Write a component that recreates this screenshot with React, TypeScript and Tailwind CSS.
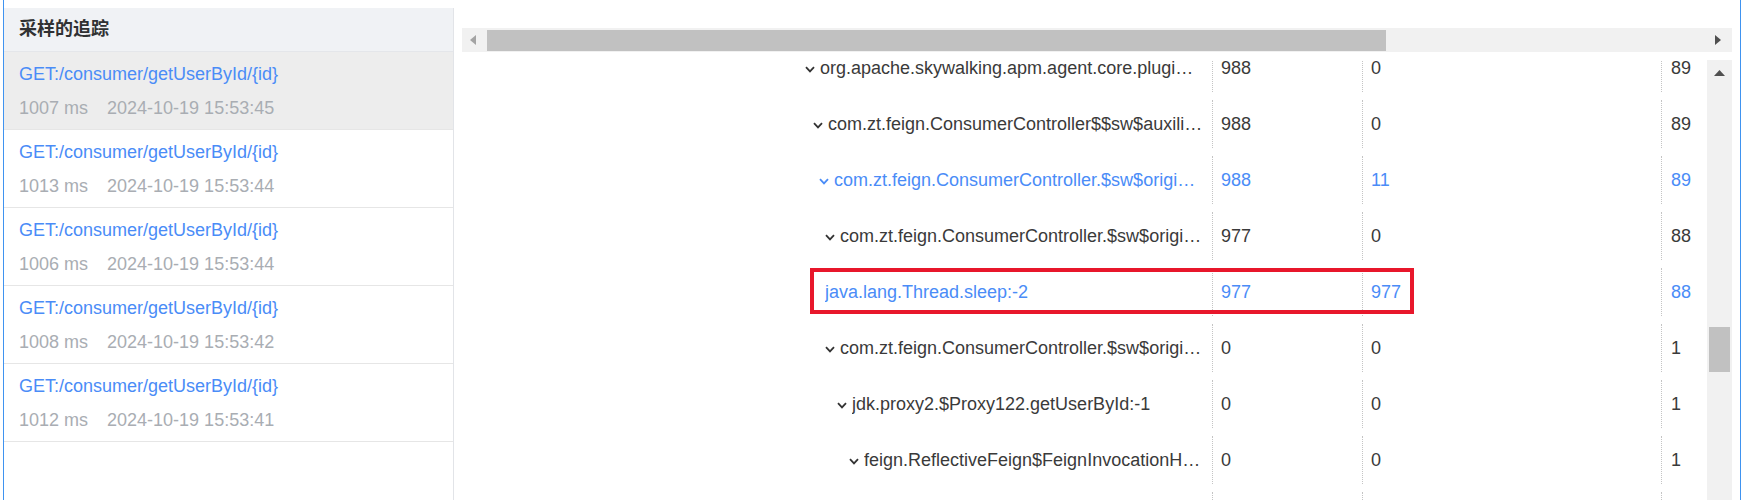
import React from "react";

const traces = [
  { ms: "1007 ms", t: "2024-10-19 15:53:45", sel: true },
  { ms: "1013 ms", t: "2024-10-19 15:53:44" },
  { ms: "1006 ms", t: "2024-10-19 15:53:44" },
  { ms: "1008 ms", t: "2024-10-19 15:53:42" },
  { ms: "1012 ms", t: "2024-10-19 15:53:41" },
];

type Row = {
  name: string;
  pl: number;
  leaf?: boolean;
  blue?: boolean;
  a: string;
  b: string;
  c: string;
  boxed?: boolean;
};

const rows: Row[] = [
  { name: "org.apache.skywalking.apm.agent.core.plugin.interceptor.enhance.InstMethodsInter.intercept:86", pl: 343, a: "988", b: "0", c: "89" },
  { name: "com.zt.feign.ConsumerController$$sw$auxiliary$k2jd7a1.call:-1", pl: 351, a: "988", b: "0", c: "89" },
  { name: "com.zt.feign.ConsumerController.$sw$original$getUserById$8s7d0f2:28", pl: 357, blue: true, a: "988", b: "11", c: "89" },
  { name: "com.zt.feign.ConsumerController.$sw$original$getUserById$8s7d0f2:27", pl: 363, a: "977", b: "0", c: "88" },
  { name: "java.lang.Thread.sleep:-2", pl: 363, leaf: true, blue: true, a: "977", b: "977", c: "88", boxed: true },
  { name: "com.zt.feign.ConsumerController.$sw$original$getUserById$8s7d0f2:30", pl: 363, a: "0", b: "0", c: "1" },
  { name: "jdk.proxy2.$Proxy122.getUserById:-1", pl: 375, a: "0", b: "0", c: "1" },
  { name: "feign.ReflectiveFeign$FeignInvocationHandler.invoke:99", pl: 387, a: "0", b: "0", c: "1" },
  { name: "feign.SynchronousMethodHandler.invoke:89", pl: 399, a: "0", b: "0", c: "1" },
];

function Chevron({ blue }: { blue?: boolean }) {
  return (
    <svg width="10" height="7" viewBox="0 0 10 7" className="mr-[5px] mt-[3px] shrink-0">
      <polyline
        points="1,1.2 5,5.4 9,1.2"
        fill="none"
        stroke={blue ? "#4a8cf7" : "#333"}
        strokeWidth="1.8"
      />
    </svg>
  );
}

export default function App() {
  return (
    <div
      className="w-[1748px] h-[500px] bg-white overflow-hidden pl-[3px]"
      style={{ fontFamily: '"Liberation Sans", Arial, "Noto Sans CJK SC", sans-serif' }}
    >
      <div className="w-[1738px] h-full border-x border-[#3f93f0] flex">
        {/* left panel */}
        <div className="w-[450px] shrink-0 pt-[8px] h-full">
          <div className="h-full border-r border-[#e2e4e8] flex flex-col">
            <div className="h-[44px] bg-[#f0f2f5] border-b border-[#e4e6ea] flex items-center pl-[15px] text-[18px] font-bold text-[#303133]">
              采样的追踪
            </div>
            {traces.map((tr, i) => (
              <div
                key={i}
                className={`h-[78px] border-b border-[#e6e6e6] pl-[15px] flex flex-col ${tr.sel ? "bg-[#ededed]" : "bg-white"}`}
              >
                <div className="text-[18px] text-[#4a8cf7] leading-[20px] mt-[12px]">GET:/consumer/getUserById/{"{id}"}</div>
                <div className="text-[18px] text-[#a9adb3] leading-[20px] mt-[14px] flex">
                  <span>{tr.ms}</span>
                  <span className="ml-[19px]">{tr.t}</span>
                </div>
              </div>
            ))}
          </div>
        </div>

        {/* right panel */}
        <div className="ml-[8px] w-[1270px] shrink-0 pt-[28px] flex flex-col h-full">
          {/* horizontal scrollbar */}
          <div className="h-[24px] bg-[#f1f1f1] flex items-stretch">
            <div className="w-[25px] flex items-center justify-center">
              <svg width="7" height="10" viewBox="0 0 7 10" className="ml-[-2px]">
                <polygon points="6,0 6,10 0,5" fill="#a3a3a3" />
              </svg>
            </div>
            <div className="w-[899px] mt-[2px] mb-[1px] bg-[#c1c1c1]" />
            <div className="flex-1" />
            <div className="w-[25px] flex items-center justify-center">
              <svg width="7" height="10" viewBox="0 0 7 10" className="ml-[-2px]">
                <polygon points="0,0 0,10 6,5" fill="#505050" />
              </svg>
            </div>
          </div>

          {/* body */}
          <div className="mt-[8px] flex-1 flex overflow-hidden">
            <div className="w-[1245px] shrink-0 overflow-hidden">
              <div className="mt-[-20px]">
                {rows.map((r, i) => {
                  const color = r.blue ? "text-[#4a8cf7]" : "text-[#3a3a3a]";
                  return (
                    <div key={i} className={`relative h-[56px] flex items-center text-[18px] ${color}`}>
                      <div className="w-[750px] shrink-0 flex items-center pr-[9px]" style={{ paddingLeft: r.pl }}>
                        {!r.leaf && <Chevron blue={r.blue} />}
                        <span className="truncate">{r.name}</span>
                      </div>
                      <div className="w-[150px] shrink-0 h-[48px] border-l border-dotted border-[#c4c4c4] pl-[8px] flex items-center">
                        {r.a}
                      </div>
                      <div className="w-[299px] shrink-0 h-[48px] border-l border-dotted border-[#c4c4c4] pl-[8px] flex items-center">
                        {r.b}
                      </div>
                      <div className="w-[46px] shrink-0 h-[48px] border-l border-dotted border-[#c4c4c4] pl-[9px] flex items-center">
                        {r.c}
                      </div>
                      {r.boxed && (
                        <div className="absolute left-[348px] top-[4px] w-[604px] h-[46px] border-[4px] border-[#e8172b]" />
                      )}
                    </div>
                  );
                })}
              </div>
            </div>
            {/* vertical scrollbar */}
            <div className="w-[25px] shrink-0 bg-[#f1f1f1] flex flex-col items-center">
              <svg width="11" height="7" viewBox="0 0 11 7" className="mt-[10px]">
                <polygon points="0,6 11,6 5.5,0" fill="#505050" />
              </svg>
              <div className="w-[21px] h-[45px] bg-[#c1c1c1] mt-[250px]" />
            </div>
          </div>
        </div>
      </div>
    </div>
  );
}
